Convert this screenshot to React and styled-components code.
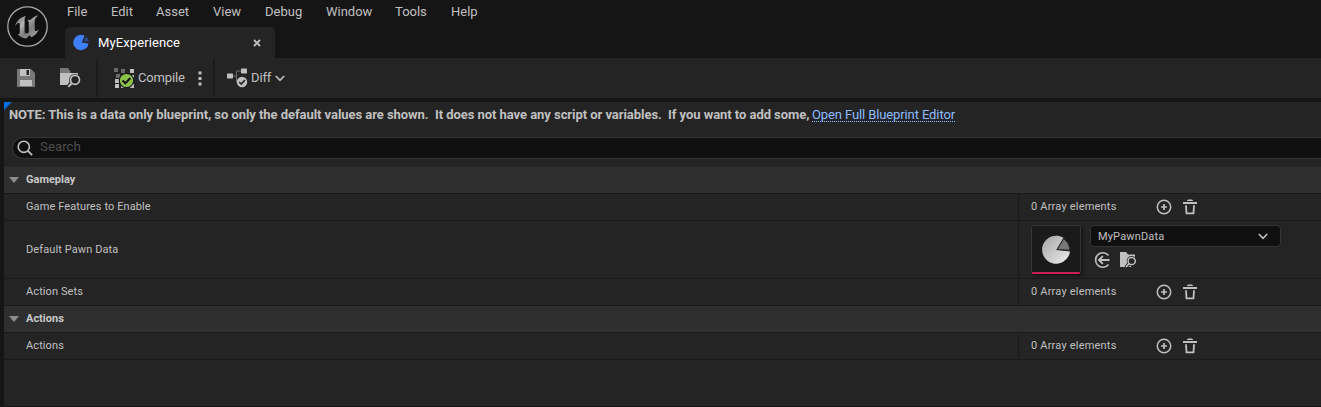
import React from "react";
import styled, { createGlobalStyle } from "styled-components";

const Global = createGlobalStyle`
  * { box-sizing: border-box; }
  html, body { margin: 0; background: #151515; overflow: hidden; }
  body { font-family: Roboto, "Liberation Sans", sans-serif; color: #c0c0c0; font-size: 13px; }
  svg { display: block; flex: none; }
`;

const Window = styled.div`
  width: 100%;
  height: 407px;
  display: flex;
  flex-direction: column;
  background: #151515;
`;

const TitleBar = styled.header`
  height: 58px;
  display: flex;
`;

const LogoBox = styled.div`
  width: 65px;
  padding: 5px 0 0 6px;
`;

const TitleColumn = styled.div`
  display: flex;
  flex-direction: column;
  justify-content: space-between;
`;

const Menu = styled.nav`
  display: flex;
  height: 24px;
  padding-left: 2px;
`;

const MenuItem = styled.span`
  width: ${(p) => p.$width}px;
  line-height: 24px;
  font-size: 13px;
`;

const Tab = styled.div`
  width: 210px;
  height: 31px;
  display: flex;
  align-items: center;
  padding: 0 13px 0 8px;
  border-radius: 5px 5px 0 0;
  background: #242424;
  color: #fff;
`;

const TabLabel = styled.span`
  flex: 1;
  padding-left: 8px;
  font-size: 13px;
  letter-spacing: 0.1px;
`;

const Toolbar = styled.div`
  height: 40px;
  display: flex;
  align-items: center;
  background: #242424;
`;

const ToolGroup = styled.div`
  width: ${(p) => p.$width}px;
  height: 40px;
  display: flex;
  align-items: center;
  padding-left: ${(p) => p.$left}px;
  gap: ${(p) => p.$gap}px;
`;

const Separator = styled.div`
  width: 2px;
  height: 38px;
  background: #1a1a1a;
`;

const ToolLabel = styled.span`
  width: ${(p) => p.$width}px;
  font-size: 13px;
  letter-spacing: -0.15px;
  line-height: 40px;
  height: 40px;
  white-space: nowrap;
`;

const Panel = styled.main`
  position: relative;
  flex: 1;
  margin: 4px 0 1px 4px;
  background: #242424;
`;

const Corner = styled.svg`
  position: absolute;
  left: 0;
  top: 0;
`;

const Note = styled.div`
  height: 35px;
  padding-left: 5px;
  line-height: 25px;
  font-size: 13px;
  font-weight: 700;
  white-space: pre;
  display: flex;
`;

const NoteText = styled.span`
  width: 803px;
  letter-spacing: -0.052px;
`;

const NoteLink = styled.a`
  height: 20px;
  font-weight: 400;
  letter-spacing: -0.11px;
  color: #8ebcff;
  text-decoration: underline dotted 1px;
  text-decoration-skip-ink: none;
  text-underline-offset: 2px;
`;

const SearchBox = styled.div`
  height: 22px;
  margin-left: 8px;
  display: flex;
  align-items: center;
  padding-left: 4px;
  gap: 7px;
  background: #0f0f0f;
  border: 1px solid #353535;
  border-right: 0;
  border-radius: 11px 0 0 11px;
  color: #4e4e4e;
`;

const SearchHint = styled.span`
  font-size: 13.33px;
  line-height: 18px;
  height: 20px;
`;

const Details = styled.section`
  margin-top: 8px;
`;

const Category = styled.div`
  height: 27px;
  display: flex;
  align-items: center;
  gap: 7px;
  padding-left: 5px;
  background: #2f2f2f;
  border-bottom: 1px solid #1a1a1a;
`;

const CategoryName = styled.span`
  font-size: 11px;
  font-weight: 700;
  line-height: 26px;
  height: 26px;
  color: #c8c8c8;
`;

const PropertyRow = styled.div`
  height: ${(p) => p.$height || 27}px;
  display: flex;
  border-bottom: 1px solid #1a1a1a;
`;

const PropertyName = styled.div`
  width: 1015px;
  padding: 0 0 1px 22px;
  display: flex;
  align-items: center;
  border-right: 1px solid #1a1a1a;
  font-size: 11px;
  letter-spacing: 0.1px;
`;

const PropertyValue = styled.div`
  padding-left: 12px;
  display: flex;
  align-items: ${(p) => (p.$top ? "flex-start" : "center")};
`;

const ArrayCount = styled.span`
  width: 125px;
  height: 26px;
  line-height: 26px;
  font-size: 11px;
  letter-spacing: 0.2px;
`;

const Actions = styled.div`
  display: flex;
  gap: ${(p) => p.$gap}px;
  padding: ${(p) => p.$pad || 0};
`;

const Thumbnail = styled.div`
  width: 50px;
  height: 49px;
  margin-top: 4px;
  display: flex;
  justify-content: center;
  padding-top: 9px;
  background: #1a1a1a;
  border: 1px solid #353535;
  border-bottom: 2px solid #c91f52;
  border-radius: 3px;
  box-shadow: 2px 2px 3px #151515;
`;

const AssetPicker = styled.div`
  margin: 4px 0 0 9px;
`;

const Dropdown = styled.div`
  width: 191px;
  height: 22px;
  display: flex;
  align-items: center;
  justify-content: space-between;
  padding: 0 12px 0 7px;
  background: #0f0f0f;
  border: 1px solid #353535;
  border-radius: 4px;
  font-size: 11px;
  letter-spacing: 0.15px;
`;

const Logo = () => (
  <svg width="42" height="42" viewBox="0 0 42 42">
    <defs>
      <linearGradient id="metal" x1="0" y1="0" x2="1" y2="1">
        <stop offset="0" stopColor="#666" />
        <stop offset=".35" stopColor="#b4b4b4" />
        <stop offset=".6" stopColor="#7b7b7b" />
        <stop offset="1" stopColor="#b0b0b0" />
      </linearGradient>
    </defs>
    <circle cx="21.5" cy="21.5" r="19.7" fill="#101010" stroke="#a8a8a8" strokeWidth="1.3" />
    <path
      fill="url(#metal)"
      d="M20 10.7c-5.7 1.5-9.4 5-10.9 10.5 1.6-2.3 3-3.7 4-3.3.6.2.7.8.7 1.7v8.2c0 1.2-.8 1.5-2.1 1.3 2 2.8 4.9 4.1 8.5 4.3l3.2-3.1 2.2 2c3.7-2.2 6.2-4.8 7.4-8.1-1.4 1.3-2.6 2.2-3.6 1.8-.6-.2-.7-.7-.7-1.4v-8.5c0-2.1 1.6-4 3.6-5.9-3.6.9-6.2 2.7-8.3 5.1-.7-.6-1.5-.7-2.5-.3.9.6 1.3 1.2 1.3 2.2v10c-.6.9-1.5 1.4-2.5 1.4-1.1 0-1.7-.6-1.7-1.8V15.2c0-1.7.3-3.3 1.4-4.5z"
    />
  </svg>
);

const PieIcon = () => (
  <svg width="17" height="17" viewBox="0 0 17 17">
    <path fill="#3f7efa" d="M8.8 8.6 11.5 1.6A7.7 7.7 0 1 0 15.6 9.5Z" />
    <path fill="#28468a" d="m10.2 7.2 2.8-4.7a6.5 6.5 0 0 1 2.8 4.9Z" />
  </svg>
);

const CloseIcon = () => (
  <svg width="10" height="10" viewBox="0 0 10 10">
    <path d="m2 2 6 6M8 2 2 8" stroke="#c0c0c0" strokeWidth="1.8" />
  </svg>
);

const SaveIcon = () => (
  <svg width="18" height="18" viewBox="0 0 18 18">
    <path fill="#787878" d="M0 0h14l4 4v14H0z" />
    <path fill="#c0c0c0" d="M3 0h10v7H3zM3 11h12v6H3z" />
    <path fill="#242424" d="M9.5 1H12v5H9.5z" />
  </svg>
);

const BrowseIcon = () => (
  <svg width="21" height="20" viewBox="0 0 21 20">
    <path fill="#787878" d="M0 0h8l2.5 3.5V5H0z" />
    <path fill="#c0c0c0" d="M0 5h18v4H0zM0 5h13v12H0z" />
    <circle cx="15" cy="12" r="6" fill="#242424" />
    <path d="m11.3 15.3-3.6 4" stroke="#242424" strokeWidth="4" />
    <circle cx="15" cy="11.8" r="4.5" fill="none" stroke="#c0c0c0" strokeWidth="1.7" />
    <path d="m11.8 15.2-3.5 3.7" stroke="#c0c0c0" strokeWidth="2" />
  </svg>
);

const CompileIcon = () => (
  <svg width="21" height="20" viewBox="0 0 21 20">
    <path fill="#696969" d="M0 0h4v4H0zM7 1h4v4H7zM2 6h4v4H2z" />
    <path fill="#c0c0c0" d="M16 1h4v4h-4zM9 6h4v4H9zM1 11h4v4H1zM1 16h4v4H1zM7 16h4v4H7zM16 16h4v4h-4zM16 7h4v4h-4z" />
    <circle cx="12.5" cy="12.5" r="7.2" fill="#8bc24a" stroke="#1c1c1c" strokeWidth="1.2" />
    <path d="m8.5 12.4 2.9 2.9 5-5.2" fill="none" stroke="#151515" strokeWidth="2.1" />
  </svg>
);

const MoreIcon = () => (
  <svg width="4" height="15" viewBox="0 0 4 15">
    <path fill="#c0c0c0" d="M.5.5h3v3h-3zM.5 6h3v3h-3zM.5 11.5h3v3h-3z" />
  </svg>
);

const DiffIcon = () => (
  <svg width="21" height="20" viewBox="0 0 21 20">
    <path d="M6 8h3.5V3H14M9.5 8v6H12" fill="none" stroke="#6b6b6b" />
    <rect x="0" y="5.5" width="6" height="5" rx=".7" fill="#c0c0c0" />
    <rect x="14" y=".5" width="6" height="5" rx=".7" fill="#c0c0c0" />
    <circle cx="15" cy="14" r="5.2" fill="#c0c0c0" />
    <path d="m12.2 14 2.1 2.1 3.6-4" fill="none" stroke="#242424" strokeWidth="1.6" />
  </svg>
);

const ChevronIcon = () => (
  <svg width="10" height="7" viewBox="0 0 10 7">
    <path d="m.8 1 4.2 4.3L9.2 1" fill="none" stroke="#c0c0c0" strokeWidth="1.6" />
  </svg>
);

const SearchIcon = () => (
  <svg width="16" height="16" viewBox="0 0 16 16">
    <circle cx="6.8" cy="6.8" r="5.6" fill="none" stroke="#c0c0c0" strokeWidth="1.6" />
    <path d="m10.8 10.8 4.4 4.4" stroke="#c0c0c0" strokeWidth="1.8" />
  </svg>
);

const ExpandIcon = () => (
  <svg width="10" height="6" viewBox="0 0 10 6">
    <path fill="#8c8c8c" d="M0 0h10L5 6z" />
  </svg>
);

const AddIcon = () => (
  <svg width="16" height="16" viewBox="0 0 16 16">
    <circle cx="8" cy="8" r="6.7" fill="none" stroke="#c0c0c0" strokeWidth="1.5" />
    <path d="M8 5v6M5 8h6" stroke="#c0c0c0" strokeWidth="1.7" />
  </svg>
);

const TrashIcon = () => (
  <svg width="14" height="16" viewBox="0 0 14 16">
    <path fill="#c0c0c0" d="M4 1.5 5 .5h4l1 1V2H4zM0 3h14v2H0z" />
    <path d="M3 6.3 3.5 14.3h7L11 6.3" fill="none" stroke="#c0c0c0" strokeWidth="1.8" />
  </svg>
);

const UseSelectedIcon = () => (
  <svg width="16" height="16" viewBox="0 0 16 16">
    <path d="M14.5 3.6A7.2 7.2 0 1 0 14.5 12.4" fill="none" stroke="#c0c0c0" strokeWidth="1.6" />
    <path d="M15.5 8H5M8.8 4.2 5 8l3.8 3.8" fill="none" stroke="#c0c0c0" strokeWidth="1.9" />
  </svg>
);

const FindAssetIcon = () => (
  <svg width="17" height="16" viewBox="0 0 17 16">
    <path fill="#c0c0c0" d="M0 0h6l2 2.5h7V8h-4v7H0z" />
    <circle cx="11.7" cy="9" r="5" fill="#242424" />
    <path d="m9 12-3.2 3.2" stroke="#242424" strokeWidth="3.5" />
    <circle cx="11.7" cy="9" r="3.6" fill="none" stroke="#c0c0c0" strokeWidth="1.5" />
    <path d="m9.2 11.7-3.2 3.2" stroke="#c0c0c0" strokeWidth="1.7" />
  </svg>
);

const AssetPie = () => (
  <svg width="30" height="30" viewBox="0 0 30 30">
    <defs>
      <linearGradient id="silver" x1="0" y1="0" x2="1" y2="1">
        <stop offset="0" stopColor="#a5a5a5" />
        <stop offset="1" stopColor="#ededed" />
      </linearGradient>
    </defs>
    <path fill="url(#silver)" d="M15.2 15 22.5 2.8A14 14 0 1 0 29 16.4Z" />
    <path fill="#777" stroke="#333" d="m16.3 14.3 6.4-10.4A13 13 0 0 1 28.5 15.2Z" />
  </svg>
);

const menus = [
  ["File", 44], ["Edit", 45], ["Asset", 57], ["View", 52],
  ["Debug", 61], ["Window", 69], ["Tools", 56], ["Help", 40],
];

const ArrayProperty = ({ name }) => (
  <PropertyRow>
    <PropertyName>{name}</PropertyName>
    <PropertyValue>
      <ArrayCount>0 Array elements</ArrayCount>
      <Actions $gap={11}>
        <AddIcon />
        <TrashIcon />
      </Actions>
    </PropertyValue>
  </PropertyRow>
);

const CategoryHeader = ({ children }) => (
  <Category>
    <ExpandIcon />
    <CategoryName>{children}</CategoryName>
  </Category>
);

export default function App() {
  return (
    <Window>
      <Global />
      <TitleBar>
        <LogoBox><Logo /></LogoBox>
        <TitleColumn>
          <Menu>
            {menus.map(([label, width]) => (
              <MenuItem key={label} $width={width}>{label}</MenuItem>
            ))}
          </Menu>
          <Tab>
            <PieIcon />
            <TabLabel>MyExperience</TabLabel>
            <CloseIcon />
          </Tab>
        </TitleColumn>
      </TitleBar>
      <Toolbar>
        <ToolGroup $width={96} $left={17} $gap={25}>
          <SaveIcon />
          <BrowseIcon />
        </ToolGroup>
        <Separator />
        <ToolGroup $width={115} $left={16} $gap={3}>
          <CompileIcon />
          <ToolLabel $width={57}>Compile</ToolLabel>
          <MoreIcon />
        </ToolGroup>
        <Separator />
        <ToolGroup $width={90} $left={12} $gap={3}>
          <DiffIcon />
          <ToolLabel $width={21}>Diff</ToolLabel>
          <ChevronIcon />
        </ToolGroup>
      </Toolbar>
      <Panel>
        <Corner width="8" height="8" viewBox="0 0 8 8">
          <path fill="#0070e0" d="M0 0h8L0 8z" />
        </Corner>
        <Note>
          <NoteText>
            {"NOTE: This is a data only blueprint, so only the default values are shown.  It does not have any script or variables.  If you want to add some, "}
          </NoteText>
          <NoteLink>Open Full Blueprint Editor</NoteLink>
        </Note>
        <SearchBox>
          <SearchIcon />
          <SearchHint>Search</SearchHint>
        </SearchBox>
        <Details>
          <CategoryHeader>Gameplay</CategoryHeader>
          <ArrayProperty name="Game Features to Enable" />
          <PropertyRow $height={58}>
            <PropertyName>Default Pawn Data</PropertyName>
            <PropertyValue $top>
              <Thumbnail><AssetPie /></Thumbnail>
              <AssetPicker>
                <Dropdown>
                  MyPawnData
                  <ChevronIcon />
                </Dropdown>
                <Actions $gap={10} $pad="5px 0 0 4px">
                  <UseSelectedIcon />
                  <FindAssetIcon />
                </Actions>
              </AssetPicker>
            </PropertyValue>
          </PropertyRow>
          <ArrayProperty name="Action Sets" />
          <CategoryHeader>Actions</CategoryHeader>
          <ArrayProperty name="Actions" />
        </Details>
      </Panel>
    </Window>
  );
}
